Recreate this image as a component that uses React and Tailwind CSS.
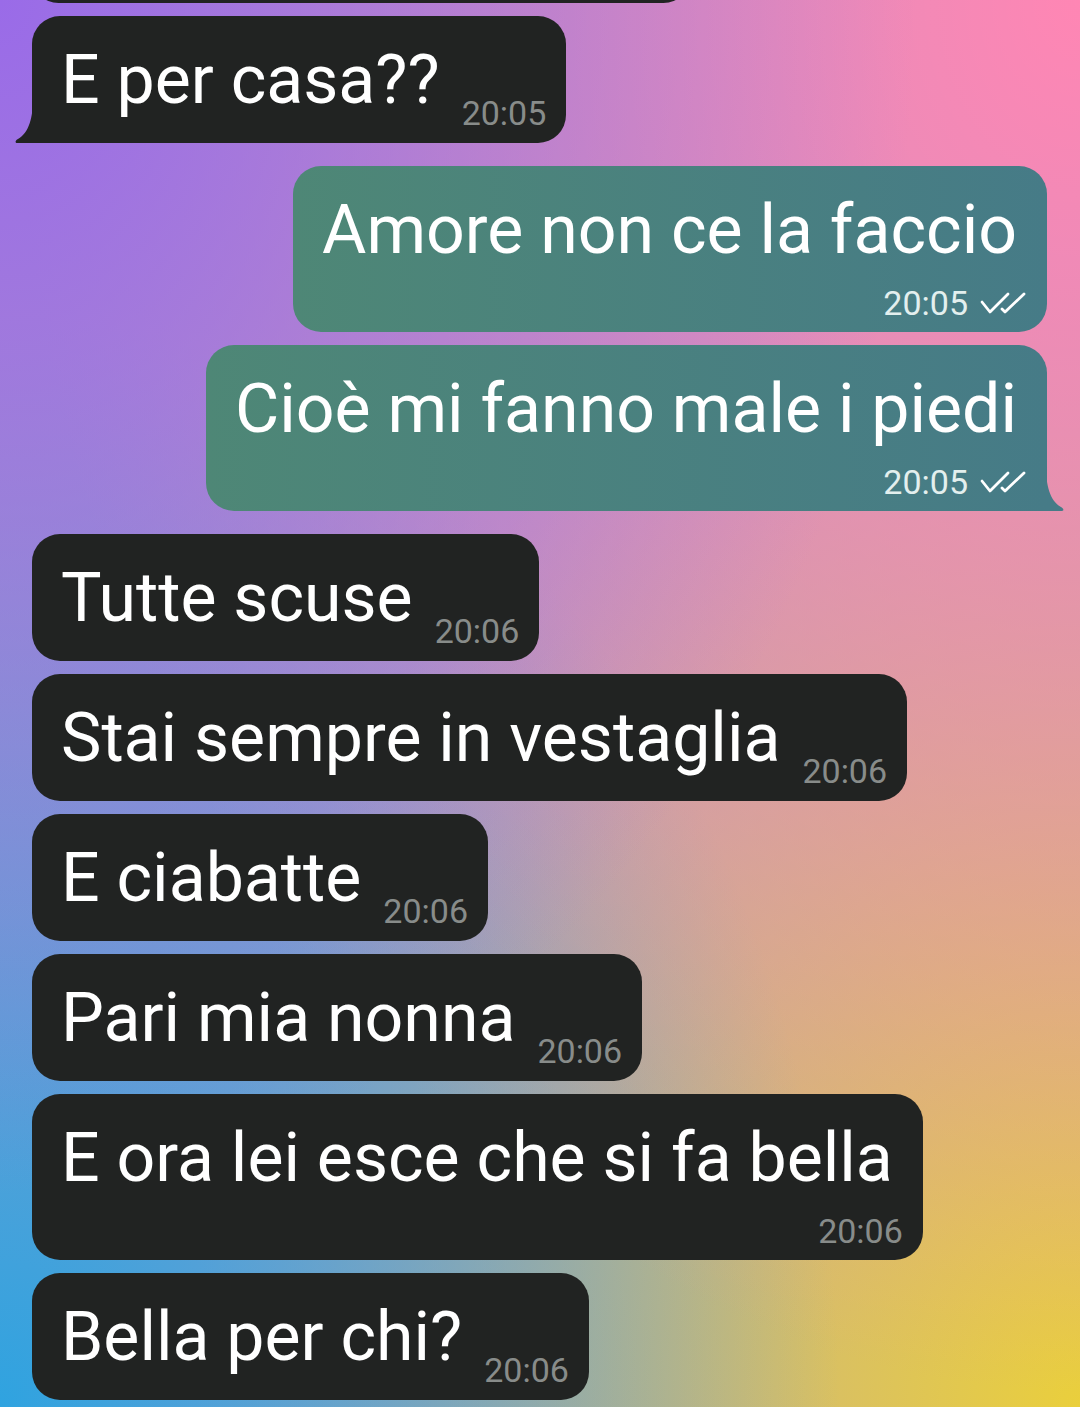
import React from "react";

const messages = [
  { out: false, text: "E per casa??", time: "20:05", tail: true },
  { out: true, text: "Amore non ce la faccio", time: "20:05", wrap: true },
  { out: true, text: "Cioè mi fanno male i piedi", time: "20:05", wrap: true, tail: true },
  { out: false, text: "Tutte scuse", time: "20:06" },
  { out: false, text: "Stai sempre in vestaglia", time: "20:06" },
  { out: false, text: "E ciabatte", time: "20:06" },
  { out: false, text: "Pari mia nonna", time: "20:06" },
  { out: false, text: "E ora lei esce che si fa bella", time: "20:06", wrap: true },
  { out: false, text: "Bella per chi?", time: "20:06" },
];

function Checks() {
  return (
    <svg width="47" height="24" viewBox="0 0 47 24" fill="none" stroke="#ffffff" strokeWidth="2.8" strokeLinecap="round" strokeLinejoin="round">
      <path d="M2 11 L10 21 L28 3" />
      <path d="M22 18 L25 21 L44 3" />
    </svg>
  );
}

function TailIn() {
  return (
    <svg className="absolute left-[-17px] bottom-0" width="19" height="44" viewBox="0 0 19 44">
      <path d="M19 0 L18 0 C18 18 14 34 3 40 C0 41.5 0 44 2 44 L19 44 Z" fill="#212322" />
    </svg>
  );
}

function TailOut() {
  return (
    <svg className="absolute right-[-17px] bottom-0" width="19" height="44" viewBox="0 0 19 44">
      <path d="M0 0 L1 0 C1 18 5 34 16 40 C19 41.5 19 44 17 44 L0 44 Z" fill="#467b87" />
    </svg>
  );
}

function Bubble({ m }) {
  const color = m.out
    ? "bg-linear-to-r from-[#4e8776] to-[#467b87]"
    : "bg-[#212322]";
  const corner = m.tail ? (m.out ? "rounded-br-none" : "rounded-bl-none") : "";
  const timeColor = m.out ? "text-[#e3efee]" : "text-[#888c8a]";

  if (m.wrap) {
    return (
      <div className={`relative flex flex-col rounded-[28px] pl-[29px] pr-[20px] pt-[24px] pb-[12px] text-white ${color} ${corner}`}>
        <div className="mr-[10px] whitespace-nowrap text-[68px] leading-[80px]">{m.text}</div>
        <div className={`mt-[16px] flex items-center justify-end gap-[12px] text-[34px] leading-[34px] ${timeColor}`}>
          <span>{m.time}</span>
          {m.out && <Checks />}
        </div>
        {m.tail && (m.out ? <TailOut /> : <TailIn />)}
      </div>
    );
  }
  return (
    <div className={`relative flex items-end rounded-[28px] pl-[29px] pr-[20px] pt-[24px] pb-[13px] text-white ${color} ${corner}`}>
      <div className="mb-[10px] whitespace-nowrap text-[68px] leading-[80px]">{m.text}</div>
      <div className={`ml-[22px] flex items-center gap-[12px] text-[34px] leading-[34px] ${timeColor}`}>
        <span>{m.time}</span>
        {m.out && <Checks />}
      </div>
      {m.tail && (m.out ? <TailOut /> : <TailIn />)}
    </div>
  );
}

export default function App() {
  return (
    <div className="h-[1407px] w-[1080px] overflow-hidden bg-[#b09bc2] bg-[radial-gradient(ellipse_at_top_left,#9a6be8_0%,transparent_60%),radial-gradient(ellipse_at_top_right,#ff86b4_0%,transparent_70%),radial-gradient(ellipse_at_bottom_left,#2fa3e0_0%,transparent_55%),radial-gradient(ellipse_at_bottom_right,#eacf3c_0%,transparent_58%)] font-[Roboto,sans-serif]">
      <div className="flex flex-col pl-[32px] pr-[33px]">
        <div className="-mt-[50px] h-[53px] w-[658px] rounded-[28px] bg-[#212322]" />
        {messages.map((m, i) => {
          const prevTail = i > 0 && messages[i - 1].tail;
          const mt = prevTail ? "mt-[23px]" : "mt-[13px]";
          return (
            <div key={i} className={`flex ${m.out ? "justify-end" : "justify-start"} ${mt}`}>
              <Bubble m={m} />
            </div>
          );
        })}
      </div>
    </div>
  );
}
